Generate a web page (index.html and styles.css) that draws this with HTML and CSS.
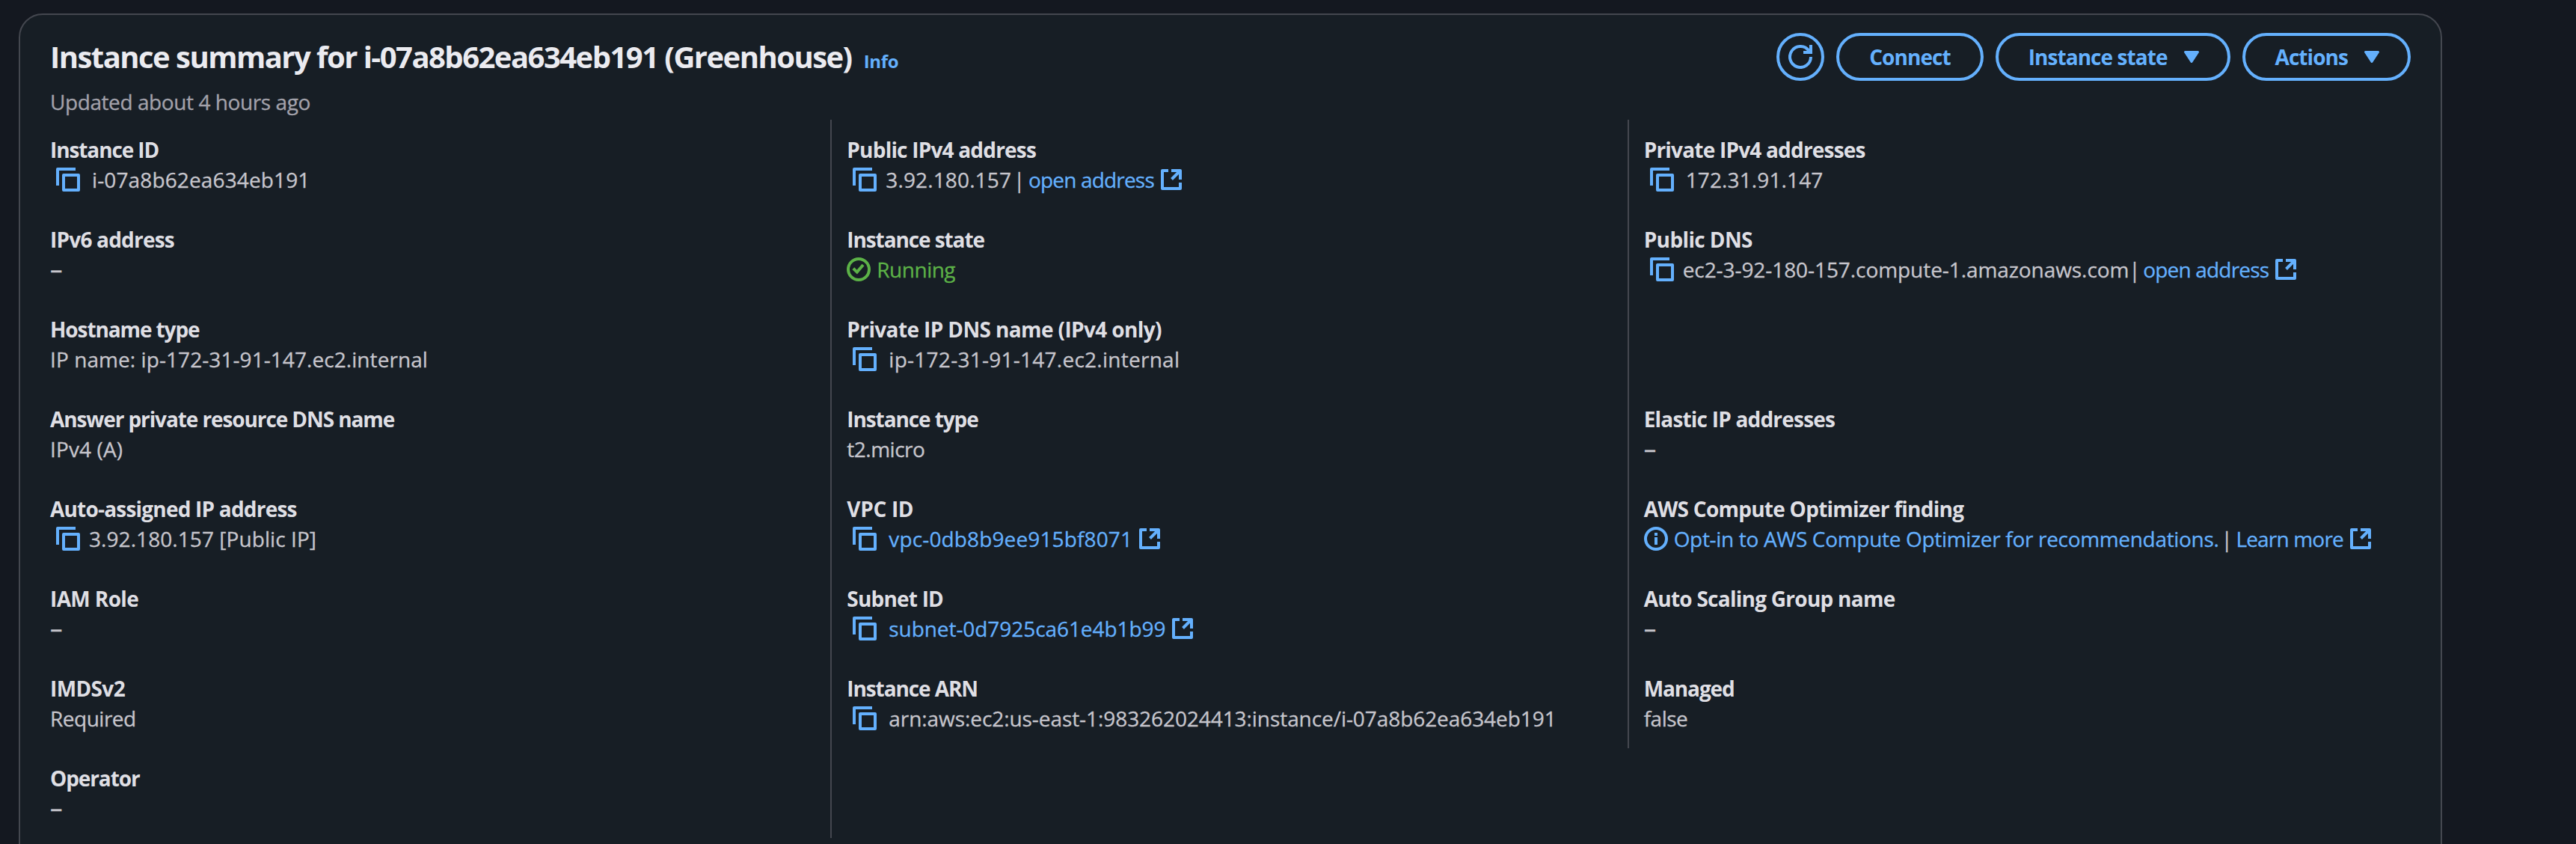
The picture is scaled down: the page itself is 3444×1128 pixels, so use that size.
FILE: index.html
```html
<!DOCTYPE html>
<html lang="en">
<head>
<meta charset="utf-8">
<title>Instance summary</title>
<link rel="stylesheet" href="styles.css">
</head>
<body>
<svg class="sprite" aria-hidden="true">
  <symbol id="copy" viewBox="0 0 32 32">
    <path d="M2 24V2H26" />
    <rect x="10" y="10" width="20" height="20" />
  </symbol>
  <symbol id="external" viewBox="0 0 32 32">
    <path d="M12 4H4V28H28V20M16 4H28V16M28 4L16.5 15.5" />
  </symbol>
  <symbol id="check" viewBox="0 0 32 32">
    <circle cx="16" cy="16" r="14" />
    <path d="M8.800 14.800L13.800 19.600L22 10" stroke-linejoin="miter" />
  </symbol>
  <symbol id="info" viewBox="0 0 32 32">
    <circle cx="16" cy="16" r="14" />
    <path d="M16 8V12M16 14V24" />
  </symbol>
  <symbol id="refresh" viewBox="0 0 32 32">
    <path d="M30 16A14 14 0 1 1 27.5 8" />
    <path d="M30 0V10H20" stroke-linejoin="miter" />
  </symbol>
  <symbol id="caret" viewBox="0 0 32 32">
    <path d="M7.5 9.5H24.500L16 22.500Z" fill="currentColor" stroke-width="3" />
  </symbol>
</svg>

<main class="card">
  <header class="header">
    <div class="heading">
      <h1 class="title"><span class="title-text">Instance summary for i-07a8b62ea634eb191 (Greenhouse)</span><a class="info-link">Info</a></h1>
      <p class="updated">Updated about 4 hours ago</p>
    </div>
    <div class="actions">
      <button class="btn btn-icon" aria-label="Refresh"><svg class="icon"><use href="#refresh"/></svg></button>
      <button class="btn">Connect</button>
      <button class="btn btn-menu">Instance state<svg class="icon"><use href="#caret"/></svg></button>
      <button class="btn btn-menu">Actions<svg class="icon"><use href="#caret"/></svg></button>
    </div>
  </header>

  <div class="columns">
    <dl class="column">
      <div class="field"><dt class="tight">Instance ID</dt><dd><svg class="icon copy"><use href="#copy"/></svg><span class="num gap-l">i-07a8b62ea634eb191</span></dd></div>
      <div class="field"><dt>IPv6 address</dt><dd class="empty">–</dd></div>
      <div class="field"><dt class="tight">Hostname type</dt><dd class="mixed">IP name: ip-172-31-91-147.ec2.internal</dd></div>
      <div class="field"><dt class="tight">Answer private resource DNS name</dt><dd class="num">IPv4 (A)</dd></div>
      <div class="field"><dt>Auto-assigned IP address</dt><dd><svg class="icon copy"><use href="#copy"/></svg><span class="mixed gap-s">3.92.180.157 [Public IP]</span></dd></div>
      <div class="field"><dt class="loose">IAM Role</dt><dd class="empty">–</dd></div>
      <div class="field"><dt class="loose">IMDSv2</dt><dd>Required</dd></div>
      <div class="field"><dt class="tight">Operator</dt><dd class="empty">–</dd></div>
    </dl>

    <dl class="column divided">
      <div class="field"><dt>Public IPv4 address</dt><dd><svg class="icon copy"><use href="#copy"/></svg><span class="num gap-s">3.92.180.157</span><span class="sep">|</span><a class="link narrow">open address</a><svg class="icon external"><use href="#external"/></svg></dd></div>
      <div class="field"><dt class="tight">Instance state</dt><dd class="running"><svg class="icon"><use href="#check"/></svg>Running</dd></div>
      <div class="field"><dt class="loose">Private IP DNS name (IPv4 only)</dt><dd><svg class="icon copy"><use href="#copy"/></svg><span class="host gap-l">ip-172-31-91-147.ec2.internal</span></dd></div>
      <div class="field"><dt class="tight">Instance type</dt><dd>t2.micro</dd></div>
      <div class="field"><dt class="looser">VPC ID</dt><dd><svg class="icon copy"><use href="#copy"/></svg><a class="link num gap-l">vpc-0db8b9ee915bf8071</a><svg class="icon external"><use href="#external"/></svg></dd></div>
      <div class="field"><dt>Subnet ID</dt><dd><svg class="icon copy"><use href="#copy"/></svg><a class="link plain gap-l">subnet-0d7925ca61e4b1b99</a><svg class="icon external"><use href="#external"/></svg></dd></div>
      <div class="field"><dt class="tight">Instance ARN</dt><dd><svg class="icon copy"><use href="#copy"/></svg><span class="plain gap-l">arn:aws:ec2:us-east-1:983262024413:instance/i-07a8b62ea634eb191</span></dd></div>
    </dl>

    <dl class="column divided short">
      <div class="field"><dt>Private IPv4 addresses</dt><dd><svg class="icon copy"><use href="#copy"/></svg><span class="num gap-l">172.31.91.147</span></dd></div>
      <div class="field double"><dt class="loose">Public DNS</dt><dd><svg class="icon copy"><use href="#copy"/></svg><span class="plain gap-s">ec2-3-92-180-157.compute-1.amazonaws.com</span><span class="sep close">|</span><a class="link narrow">open address</a><svg class="icon external"><use href="#external"/></svg></dd></div>
      <div class="field"><dt>Elastic IP addresses</dt><dd class="empty">–</dd></div>
      <div class="field"><dt class="medium">AWS Compute Optimizer finding</dt><dd><svg class="icon status"><use href="#info"/></svg><a class="link sentence">Opt-in to AWS Compute Optimizer for recommendations.</a><span class="sep">|</span><a class="link narrow">Learn more</a><svg class="icon external"><use href="#external"/></svg></dd></div>
      <div class="field"><dt class="medium">Auto Scaling Group name</dt><dd class="empty">–</dd></div>
      <div class="field"><dt class="tight">Managed</dt><dd>false</dd></div>
    </dl>
  </div>
</main>
</body>
</html>
```
FILE: styles.css
```css
:root {
  --page: #141820;
  --surface: #171e25;
  --border: #44474f;
  --heading: #ebebf0;
  --label: #dfdfe4;
  --text: #c6c5cc;
  --muted: #a3a2ab;
  --accent: #64b0fd;
  --success: #5cb247;
}

* { box-sizing: border-box; }

html, body { height: 100%; }

body {
  margin: 0;
  padding: 18px 179px 0 25px;
  overflow: hidden;
  background: var(--page);
  color: var(--text);
  font: 400 28px/40px "Open Sans", "Noto Sans", sans-serif;
}

.sprite { display: none; }

.icon {
  flex: none;
  width: 32px;
  height: 32px;
  fill: none;
  stroke: currentColor;
  stroke-width: 4;
  stroke-linejoin: round;
}

.card {
  height: 1160px;
  padding: 24px 40px 0;
  background: var(--surface);
  border: 2px solid var(--border);
  border-radius: 32px;
}

.header {
  display: flex;
  justify-content: space-between;
  align-items: flex-start;
  height: 116px;
}

.heading { padding-top: 8px; }

.title {
  display: flex;
  align-items: baseline;
  gap: 16px;
  height: 48px;
  margin: 0 0 16px;
  color: var(--heading);
  font-size: 40px;
  font-weight: 700;
  line-height: 48px;
}

.title-text { letter-spacing: -1.53px; }

.info-link {
  color: var(--accent);
  font-size: 24px;
  letter-spacing: -0.3px;
}

.updated {
  margin: 0;
  color: var(--muted);
  letter-spacing: -0.42px;
  -webkit-text-stroke: 0.3px;
}

.actions { display: flex; gap: 16px; }

.btn {
  display: flex;
  align-items: center;
  height: 64px;
  padding: 0 40px;
  background: none;
  border: 4px solid var(--accent);
  border-radius: 32px;
  color: var(--accent);
  font: inherit;
  font-weight: 700;
  letter-spacing: -0.94px;
}

.btn-icon { padding: 0 12px; }
.btn-menu { gap: 16px; padding-right: 32px; }

.columns {
  display: grid;
  grid-template-columns: repeat(3, minmax(0, 1fr));
  gap: 40px;
}

.column {
  display: flex;
  flex-direction: column;
  gap: 40px;
  margin: 0;
  padding: 20px 0;
}

.divided {
  margin-left: -22px;
  padding-left: 20px;
  border-left: 2px solid var(--border);
}

.short { align-self: start; }

.field { height: 80px; white-space: nowrap; }
.field.double { height: 200px; }

dt {
  color: var(--label);
  font-weight: 700;
  letter-spacing: -0.8px;
}

dt.tight { letter-spacing: -1.1px; }
dt.medium { letter-spacing: -0.74px; }
dt.loose { letter-spacing: -0.62px; }
dt.looser { letter-spacing: -0.33px; }

dd {
  display: flex;
  align-items: center;
  height: 40px;
  margin: 0;
  letter-spacing: -0.5px;
  -webkit-text-stroke: 0.3px;
}

.num { letter-spacing: 0.13px; }
.mixed { letter-spacing: 0.07px; }
.host { letter-spacing: 0.26px; }
.plain { letter-spacing: -0.07px; }
.sentence { letter-spacing: -0.32px; }
.narrow { letter-spacing: -0.82px; }

.empty { font-size: 33px; letter-spacing: 0; }

.copy { margin-left: 8px; color: var(--accent); }
.external { margin-left: 7px; color: var(--accent); }
.status { margin-right: 8px; color: var(--accent); }

.gap-s { margin-left: 12px; }
.gap-l { margin-left: 16px; }

.sep { margin: 0 5px 0 3px; }
.sep.close { margin: 0 4px 0 0; }

.link { color: var(--accent); }

.running { gap: 8px; color: var(--success); }
```
